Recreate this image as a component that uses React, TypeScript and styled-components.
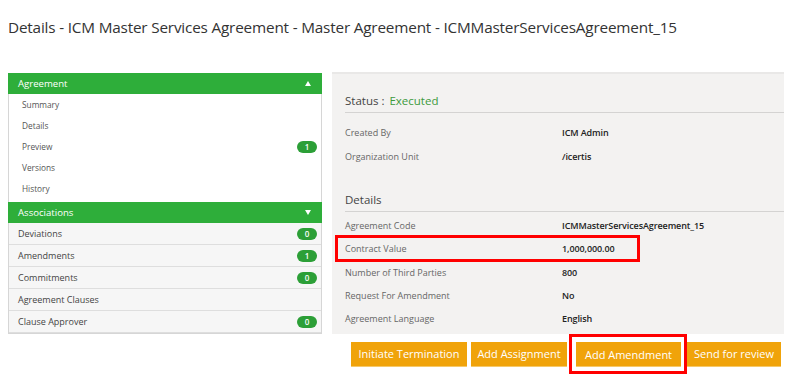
import React from "react";
import styled, { createGlobalStyle } from "styled-components";

const Global = createGlobalStyle`
  html, body { margin: 0; padding: 0; background: #ffffff; }
  body { font-family: "Open Sans", "Noto Sans", Arial, sans-serif; color: #333; }
  *, *::before, *::after { box-sizing: border-box; }
`;

const Page = styled.div`
  width: 790px;
  height: 391px;
  overflow: hidden;
  padding: 14px 0 0 8px;
`;

const Title = styled.h1`
  margin: 0;
  font-size: 15.3px;
  font-weight: 400;
  line-height: 26px;
  color: #333;
  letter-spacing: -0.18px;
`;

const Main = styled.div`
  display: flex;
  align-items: flex-start;
  gap: 10px;
  margin-top: 32px;
`;

const Sidebar = styled.div`
  width: 314px;
  border: 1px solid #d6d6d6;
  border-top: none;
  margin-top: 1px;
  background: #fff;
`;

const GroupHeader = styled.div`
  height: 21px;
  background: #2eae3a;
  color: #fff;
  font-size: 9.6px;
  display: flex;
  align-items: center;
  justify-content: space-between;
  padding: 0 11px 0 10px;
  margin: 0 -1px;
`;

const Caret = styled.span<{ $up?: boolean }>`
  width: 0;
  height: 0;
  border-left: 3.5px solid transparent;
  border-right: 3.5px solid transparent;
  ${(p) => (p.$up ? "border-bottom: 5px solid #fff;" : "border-top: 5px solid #fff;")}
`;

const SubList = styled.div`
  padding-bottom: 3px;
`;

const SubItem = styled.div`
  height: 21px;
  display: flex;
  align-items: center;
  justify-content: space-between;
  padding: 0 4px 0 13px;
  font-size: 8.3px;
  color: #555;
`;

const AssocItem = styled.div`
  height: 22px;
  display: flex;
  align-items: center;
  justify-content: space-between;
  padding: 0 4px 0 9px;
  font-size: 9px;
  color: #444;
  background: #f6f6f6;
  border-bottom: 1px solid #dedede;
`;

const Badge = styled.span`
  min-width: 20px;
  height: 12px;
  border-radius: 6px;
  background: #2c9f37;
  color: #fff;
  font-size: 8px;
  font-weight: 600;
  display: inline-flex;
  align-items: center;
  justify-content: center;
  padding: 0 5px;
`;

const Right = styled.div`
  width: 452px;
  display: flex;
  flex-direction: column;
`;

const Panel = styled.div`
  background: #f3f2f1;
  border-top: 2px solid #e9e8e7;
  height: 262px;
  padding: 14px 0 0 13px;
`;

const SectionHead = styled.div<{ $mb: number }>`
  height: 25px;
  display: flex;
  align-items: center;
  font-size: 11.5px;
  color: #444;
  border-bottom: 1px solid #d4d3d2;
  margin-bottom: ${(p) => p.$mb}px;
`;

const StatusValue = styled.span`
  color: #3c9a3c;
  margin-left: 5px;
`;

const Row = styled.div<{ $h?: number; $highlight?: boolean }>`
  position: relative;
  height: ${(p) => p.$h ?? 23.25}px;
  display: grid;
  grid-template-columns: 217px 1fr;
  align-items: center;
  font-size: 9px;
  ${(p) =>
    p.$highlight &&
    `&::after {
      content: "";
      position: absolute;
      left: -10px;
      top: -2px;
      width: 305px;
      height: 27px;
      border: 3px solid #f00;
    }`}
`;

const Label = styled.span`
  color: #666;
`;

const Value = styled.span`
  color: #222;
  font-weight: 600;
  letter-spacing: -0.1px;
`;

const Gap = styled.div<{ $h: number }>`
  height: ${(p) => p.$h}px;
`;

const Actions = styled.div`
  display: flex;
  justify-content: flex-end;
  align-items: center;
  padding-right: 3px;
  height: 40px;
`;

const Button = styled.button<{ $w: number; $ml?: number }>`
  width: ${(p) => p.$w}px;
  height: 25px;
  margin-left: ${(p) => p.$ml ?? 0}px;
  background: #f0a30a;
  border: none;
  border-bottom: 1px solid #f6c96a;
  color: #fff;
  font-family: inherit;
  font-size: 11px;
  padding: 0;
  cursor: pointer;
`;

const Highlight = styled.div`
  margin-left: 2px;
  border: 3px solid #f00;
  padding: 5px 3px 4px 4px;
  display: flex;
`;

const sub = [
  { name: "Summary" },
  { name: "Details" },
  { name: "Preview", badge: "1" },
  { name: "Versions" },
  { name: "History" },
];

const assoc = [
  { name: "Deviations", badge: "0" },
  { name: "Amendments", badge: "1" },
  { name: "Commitments", badge: "0" },
  { name: "Agreement Clauses" },
  { name: "Clause Approver", badge: "0" },
];

export default function App() {
  return (
    <Page>
      <Global />
      <Title>
        Details - ICM Master Services Agreement - Master Agreement - ICMMasterServicesAgreement_15
      </Title>
      <Main>
        <Sidebar>
          <GroupHeader>
            <span>Agreement</span>
            <Caret $up />
          </GroupHeader>
          <SubList>
            {sub.map((s) => (
              <SubItem key={s.name}>
                <span>{s.name}</span>
                {s.badge && <Badge>{s.badge}</Badge>}
              </SubItem>
            ))}
          </SubList>
          <GroupHeader>
            <span>Associations</span>
            <Caret />
          </GroupHeader>
          {assoc.map((a) => (
            <AssocItem key={a.name}>
              <span>{a.name}</span>
              {a.badge && <Badge>{a.badge}</Badge>}
            </AssocItem>
          ))}
        </Sidebar>
        <Right>
          <Panel>
            <SectionHead $mb={7}>
              Status :<StatusValue>Executed</StatusValue>
            </SectionHead>
            <Row $h={24}>
              <Label>Created By</Label>
              <Value>ICM Admin</Value>
            </Row>
            <Row $h={24}>
              <Label>Organization Unit</Label>
              <Value>/icertis</Value>
            </Row>
            <Gap $h={19} />
            <SectionHead $mb={2}>Details</SectionHead>
            <Row>
              <Label>Agreement Code</Label>
              <Value>ICMMasterServicesAgreement_15</Value>
            </Row>
            <Row $highlight>
              <Label>Contract Value</Label>
              <Value>1,000,000.00</Value>
            </Row>
            <Row>
              <Label>Number of Third Parties</Label>
              <Value>800</Value>
            </Row>
            <Row>
              <Label>Request For Amendment</Label>
              <Value>No</Value>
            </Row>
            <Row>
              <Label>Agreement Language</Label>
              <Value>English</Value>
            </Row>
          </Panel>
          <Actions>
            <Button $w={116}>Initiate Termination</Button>
            <Button $w={96} $ml={4}>Add Assignment</Button>
            <Highlight>
              <Button $w={105}>Add Amendment</Button>
            </Highlight>
            <Button $w={94}>Send for review</Button>
          </Actions>
        </Right>
      </Main>
    </Page>
  );
}
